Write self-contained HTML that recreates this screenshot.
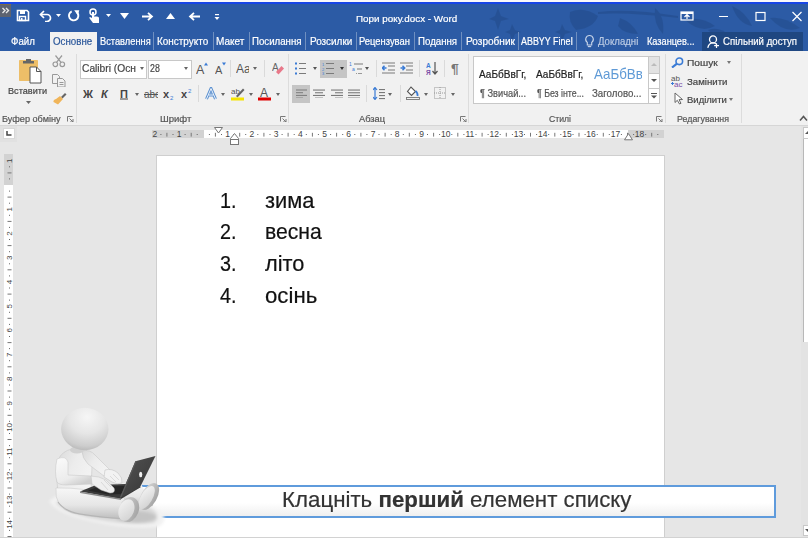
<!DOCTYPE html>
<html><head><meta charset="utf-8"><style>
html,body{margin:0;padding:0;}
body{width:808px;height:538px;overflow:hidden;position:relative;background:#e6e6e6;font-family:"Liberation Sans", sans-serif;}
.r{position:absolute;display:block;}
.t{position:absolute;white-space:pre;-webkit-text-stroke:0.2px currentColor;}
</style></head><body>
<div class="r" style="left:0px;top:0px;width:808px;height:2px;background:#fafafa;"></div><div class="r" style="left:0px;top:2px;width:808px;height:2px;background:#1846e6;"></div><div class="r" style="left:0px;top:4px;width:808px;height:47px;background:#2c5ba5;"></div><svg class="r" style="left:470px;top:4px;" width="338" height="47" viewBox="0 0 338 47">
<g fill="#234c8c" opacity="0.6">
<path d="M28 4 l3 8 l8 3 l-8 2 l-3 9 l-3 -9 l-6 -2 l6 -3z"/>
<path d="M42 20 l3 6 l6 2 l-6 2 l-3 7 l-2 -7 l-5 -2 l5 -2z"/>
<path d="M92 20 l3 6 l7 2 l-7 2 l-3 7 l-2 -7 l-5 -2 l5 -2z"/>
<path d="M100 8 q14 -6 28 4 q-4 12 -22 14 q-8 -8 -6 -18z"/>
<path d="M128 8 q30 -4 80 4 l0 2 q-50 -6 -80 -4z"/>
<path d="M150 14 q12 4 18 16 q-14 0 -20 -8z"/>
<path d="M185 4 q10 8 8 26 q-10 -10 -8 -26z"/>
<path d="M215 16 q16 -4 30 6 q-14 8 -30 -6z"/>
<path d="M262 2 q14 6 20 20 q-14 -2 -20 -20z"/>
<path d="M300 14 q14 -2 30 10 q-16 6 -30 -10z"/>
<path d="M238 26 q12 -4 22 6 q-12 6 -22 -6z"/>
</g></svg><div class="r" style="left:0px;top:4px;width:11px;height:13px;background:#5d6370;border-top:1px solid #7a6a4a;box-sizing:border-box;"></div><svg class="r" style="left:1px;top:7px;" width="9" height="7" viewBox="0 0 9 7"><path d="M1.5 1 L4 3.5 L1.5 6 M5 1 L7.5 3.5 L5 6" stroke="#e8e8e8" stroke-width="1.4" fill="none"/></svg><svg class="r" style="left:16px;top:9px;" width="14" height="13" viewBox="0 0 14 13"><path d="M1.5 1.5 h9.5 l1.5 1.5 v8.5 h-11z" fill="none" stroke="#fff" stroke-width="1.6"/><rect x="4" y="1.5" width="5" height="3.5" fill="#fff"/><rect x="3.5" y="7.5" width="6" height="4" fill="none" stroke="#fff" stroke-width="1.4"/><rect x="5" y="9" width="1.5" height="2" fill="#fff"/></svg><svg class="r" style="left:39px;top:9px;" width="15" height="13" viewBox="0 0 15 13"><path d="M5 2 L1.5 5.5 L5 9" fill="none" stroke="#fff" stroke-width="1.7"/><path d="M2 5.5 H8 a3.5 3.5 0 0 1 0 7 H6" fill="none" stroke="#fff" stroke-width="1.7"/></svg><svg class="r" style="left:56px;top:14px;" width="5" height="3" viewBox="0 0 5 3"><path d="M0 0 H5 L2.5 3z" fill="#fff"/></svg><svg class="r" style="left:67px;top:9px;" width="14" height="13" viewBox="0 0 14 13"><path d="M4.7 2.4 A4.7 4.7 0 1 0 10.1 3.5" fill="none" stroke="#fff" stroke-width="1.9"/><path d="M7.2 1.2 L12.3 1.2 L10.8 6.2z" fill="#fff"/></svg><svg class="r" style="left:88px;top:8px;" width="12" height="16" viewBox="0 0 12 16"><circle cx="5" cy="4" r="3" fill="none" stroke="#fff" stroke-width="1.5"/><path d="M4 4 v6 l-2 -1 q-1.5 0.5 0 2 l3 4 h6 v-5 q0 -1.5 -2 -1.5 h-3 v-4.5z" fill="#fff"/></svg><svg class="r" style="left:106px;top:14px;" width="5" height="3" viewBox="0 0 5 3"><path d="M0 0 H5 L2.5 3z" fill="#fff"/></svg><svg class="r" style="left:120px;top:13px;" width="9" height="6" viewBox="0 0 9 6"><path d="M0 0 H9 L4.5 6z" fill="#fff"/></svg><svg class="r" style="left:142px;top:12px;" width="12" height="9" viewBox="0 0 12 9"><path d="M0 4.5 H10 M6 0.8 L10 4.5 L6 8.2" fill="none" stroke="#fff" stroke-width="1.8"/></svg><svg class="r" style="left:166px;top:13px;" width="9" height="6" viewBox="0 0 9 6"><path d="M0 6 H9 L4.5 0z" fill="#fff"/></svg><svg class="r" style="left:188px;top:12px;" width="12" height="9" viewBox="0 0 12 9"><path d="M12 4.5 H2 M6 0.8 L2 4.5 L6 8.2" fill="none" stroke="#fff" stroke-width="1.8"/></svg><svg class="r" style="left:214px;top:14px;" width="6" height="7" viewBox="0 0 6 7"><rect x="1" y="0" width="4" height="1.2" fill="#fff"/><path d="M0.5 3 H5.5 L3 6z" fill="#fff"/></svg><svg class="r" style="left:680px;top:11px;" width="14" height="10" viewBox="0 0 14 10"><rect x="1" y="1" width="12" height="8" fill="none" stroke="#fff" stroke-width="1.2"/><rect x="1" y="1" width="12" height="2" fill="#fff"/><path d="M4.5 6 L7 3.5 L9.5 6 M7 3.5 V8" stroke="#fff" stroke-width="1.2" fill="none"/></svg><div class="r" style="left:719px;top:16px;width:9px;height:1px;background:#fff;"></div><svg class="r" style="left:755px;top:11px;" width="11" height="11" viewBox="0 0 11 11"><rect x="1" y="1.5" width="9" height="8" fill="none" stroke="#fff" stroke-width="1.2"/></svg><svg class="r" style="left:791px;top:11px;" width="12" height="11" viewBox="0 0 12 11"><path d="M1.5 1 L10.5 10 M10.5 1 L1.5 10" stroke="#fff" stroke-width="1.2"/></svg><div class="r" style="left:50px;top:32px;width:47px;height:19px;background:#f1f1f1;"></div><div class="r" style="left:702px;top:32px;width:101px;height:19px;background:#1f4781;"></div><div class="r" style="left:153px;top:32px;width:1px;height:18px;background:#6f8fc0;"></div><div class="r" style="left:213px;top:32px;width:1px;height:18px;background:#6f8fc0;"></div><div class="r" style="left:249px;top:32px;width:1px;height:18px;background:#6f8fc0;"></div><div class="r" style="left:305px;top:32px;width:1px;height:18px;background:#6f8fc0;"></div><div class="r" style="left:356px;top:32px;width:1px;height:18px;background:#6f8fc0;"></div><div class="r" style="left:414px;top:32px;width:1px;height:18px;background:#6f8fc0;"></div><div class="r" style="left:461px;top:32px;width:1px;height:18px;background:#6f8fc0;"></div><div class="r" style="left:518px;top:32px;width:1px;height:18px;background:#6f8fc0;"></div><div class="r" style="left:576px;top:32px;width:1px;height:18px;background:#6f8fc0;"></div><svg class="r" style="left:584px;top:34px;" width="11" height="15" viewBox="0 0 11 15"><path d="M5.5 1.5 a3.8 3.8 0 0 0 -2.2 6.9 v2.6 h4.4 v-2.6 a3.8 3.8 0 0 0 -2.2 -6.9z" fill="none" stroke="#c9d6ea" stroke-width="1.1"/><path d="M3.8 12.6 h3.4" stroke="#c9d6ea" stroke-width="1.1"/></svg><svg class="r" style="left:706px;top:33px;" width="14" height="16" viewBox="0 0 14 16"><circle cx="7" cy="6.4" r="3.5" fill="none" stroke="#fff" stroke-width="1.3"/><path d="M1.8 14.8 q1 -5 5.2 -5 q2.5 0 3.8 1.6" fill="none" stroke="#fff" stroke-width="1.3"/><path d="M10.5 10.5 v4.5 M8.2 12.7 h4.8" stroke="#fff" stroke-width="1.2"/></svg><div class="r" style="left:0px;top:51px;width:808px;height:74px;background:#f1f1f1;"></div><div class="r" style="left:0px;top:125px;width:808px;height:1px;background:#d6d6d6;"></div><div class="r" style="left:76px;top:54px;width:1px;height:69px;background:#dcdcdc;"></div><div class="r" style="left:288px;top:54px;width:1px;height:69px;background:#dcdcdc;"></div><div class="r" style="left:468px;top:54px;width:1px;height:69px;background:#dcdcdc;"></div><div class="r" style="left:665px;top:54px;width:1px;height:69px;background:#dcdcdc;"></div><div class="r" style="left:741px;top:54px;width:1px;height:69px;background:#dcdcdc;"></div><svg class="r" style="left:67px;top:116px;" width="7" height="6" viewBox="0 0 7 6"><path d="M0.5 5.5 V0.5 H5.5" fill="none" stroke="#777" stroke-width="1"/><path d="M2.5 2.5 L6 6 M6 3 V6 H3" fill="none" stroke="#777" stroke-width="1"/></svg><svg class="r" style="left:280px;top:116px;" width="7" height="6" viewBox="0 0 7 6"><path d="M0.5 5.5 V0.5 H5.5" fill="none" stroke="#777" stroke-width="1"/><path d="M2.5 2.5 L6 6 M6 3 V6 H3" fill="none" stroke="#777" stroke-width="1"/></svg><svg class="r" style="left:460px;top:116px;" width="7" height="6" viewBox="0 0 7 6"><path d="M0.5 5.5 V0.5 H5.5" fill="none" stroke="#777" stroke-width="1"/><path d="M2.5 2.5 L6 6 M6 3 V6 H3" fill="none" stroke="#777" stroke-width="1"/></svg><svg class="r" style="left:656px;top:116px;" width="7" height="6" viewBox="0 0 7 6"><path d="M0.5 5.5 V0.5 H5.5" fill="none" stroke="#777" stroke-width="1"/><path d="M2.5 2.5 L6 6 M6 3 V6 H3" fill="none" stroke="#777" stroke-width="1"/></svg><svg class="r" style="left:18px;top:57px;" width="25" height="27" viewBox="0 0 25 27"><rect x="1" y="3" width="19" height="21" rx="1" fill="#f0c674"/><rect x="1" y="3" width="19" height="21" rx="1" fill="#e9b55c" opacity="0.5"/><path d="M5 6.5 h11 v-2.5 h-3 v-2 h-5 v2 h-3z" fill="#666"/><path d="M12 10 h6.5 l4.5 4.5 v11.5 h-11z" fill="#fff" stroke="#555" stroke-width="1"/><path d="M18.5 10 v4.5 h4.5" fill="none" stroke="#555" stroke-width="1"/></svg><svg class="r" style="left:26px;top:101px;" width="5" height="3" viewBox="0 0 5 3"><path d="M0 0 H5 L2.5 3z" fill="#666"/></svg><svg class="r" style="left:52px;top:55px;" width="14" height="13" viewBox="0 0 14 13"><circle cx="3.3" cy="9.3" r="2.3" fill="none" stroke="#999" stroke-width="1.2"/><circle cx="10.3" cy="9.3" r="2.3" fill="none" stroke="#999" stroke-width="1.2"/><path d="M4.5 7.3 L10 0.5 M9 7.3 L3.5 0.5" stroke="#999" stroke-width="1.2"/></svg><svg class="r" style="left:52px;top:74px;" width="14" height="13" viewBox="0 0 14 13"><path d="M0.5 0.5 h5 l2 2 v7 h-7z" fill="#f1f1f1" stroke="#999" stroke-width="1"/><path d="M5.5 4.5 h5 l2.5 2.5 v6 h-7.5z" fill="#f1f1f1" stroke="#999" stroke-width="1"/><path d="M7.5 8.5 h4 M7.5 10.5 h4" stroke="#999"/></svg><svg class="r" style="left:52px;top:92px;" width="15" height="14" viewBox="0 0 15 14"><path d="M9 5 L13 1 L14.5 2.5 L10.5 6.5z" fill="#666"/><path d="M8 4 L11 7 L6 12.5 L1.5 10 Q1 8 4 7z" fill="#f0b55a"/></svg><div class="r" style="left:80px;top:60px;width:67px;height:19px;background:#ffffff;border:1px solid #c8c8c8;box-sizing:border-box;"></div><div class="r" style="left:148px;top:60px;width:44px;height:19px;background:#ffffff;border:1px solid #c8c8c8;box-sizing:border-box;"></div><div class="r" style="left:82px;top:60px;width:54px;height:18px;overflow:hidden"><div class="t" style="left:0px;top:3.29px;font-size:11px;line-height:11px;color:#444;transform:scaleX(0.93);transform-origin:0 0">Calibri (Основний)</div></div><svg class="r" style="left:140px;top:67px;" width="4" height="3" viewBox="0 0 4 3"><path d="M0 0 H4 L2 3z" fill="#666"/></svg><svg class="r" style="left:184px;top:67px;" width="4" height="3" viewBox="0 0 4 3"><path d="M0 0 H4 L2 3z" fill="#666"/></svg><svg class="r" style="left:196px;top:62px;" width="12" height="13" viewBox="0 0 12 13"><text x="0" y="12" font-family="Liberation Sans" font-size="12.5" fill="#555">A</text><path d="M8 3.5 L10 0.5 L12 3.5z" fill="#3a7bd5"/></svg><svg class="r" style="left:215px;top:62px;" width="11" height="13" viewBox="0 0 11 13"><text x="0" y="12" font-family="Liberation Sans" font-size="11" fill="#555">A</text><path d="M7 0.5 L11 0.5 L9 3.5z" fill="#3a7bd5"/></svg><div class="r" style="left:230px;top:60px;width:1px;height:17px;background:#dadada;"></div><svg class="r" style="left:236px;top:62px;" width="13" height="12" viewBox="0 0 13 12"><text x="0" y="11" font-family="Liberation Sans" font-size="12" fill="#555">Aa</text></svg><svg class="r" style="left:253px;top:67px;" width="4" height="3" viewBox="0 0 4 3"><path d="M0 0 H4 L2 3z" fill="#666"/></svg><div class="r" style="left:264px;top:60px;width:1px;height:17px;background:#dadada;"></div><svg class="r" style="left:272px;top:62px;" width="12" height="13" viewBox="0 0 12 13"><text x="0" y="9" font-family="Liberation Sans" font-size="10" fill="#666">A</text><path d="M4 10 L9.5 4 L12 6.5 L6.5 12.5z" fill="#e8788a"/></svg><svg class="r" style="left:83px;top:89px;" width="11" height="9" viewBox="0 0 11 9"><text x="0" y="8.5" font-family="Liberation Sans" font-weight="bold" font-size="11" fill="#444">Ж</text></svg><svg class="r" style="left:101px;top:89px;" width="9" height="9" viewBox="0 0 9 9"><text x="0" y="8.5" font-family="Liberation Sans" font-weight="bold" font-style="italic" font-size="11" fill="#444">К</text></svg><svg class="r" style="left:120px;top:89px;" width="9" height="11" viewBox="0 0 9 11"><text x="0" y="8.5" font-family="Liberation Sans" font-weight="bold" font-size="11" fill="#444">П</text><rect x="0" y="9.5" width="8" height="1" fill="#444"/></svg><svg class="r" style="left:135px;top:93px;" width="4" height="3" viewBox="0 0 4 3"><path d="M0 0 H4 L2 3z" fill="#666"/></svg><svg class="r" style="left:144px;top:89px;" width="14" height="10" viewBox="0 0 14 10"><text x="0" y="8.5" font-family="Liberation Sans" font-size="10" fill="#555">abc</text><rect x="0" y="5" width="14" height="1" fill="#555"/></svg><svg class="r" style="left:163px;top:89px;" width="12" height="11" viewBox="0 0 12 11"><text x="0" y="8.5" font-family="Liberation Sans" font-weight="bold" font-size="11" fill="#444">x</text><text x="7" y="10.5" font-family="Liberation Sans" font-size="6" fill="#3a7bd5">2</text></svg><svg class="r" style="left:181px;top:88px;" width="11" height="11" viewBox="0 0 11 11"><text x="0" y="9.5" font-family="Liberation Sans" font-weight="bold" font-size="11" fill="#444">x</text><text x="7" y="5" font-family="Liberation Sans" font-size="6" fill="#3a7bd5">2</text></svg><div class="r" style="left:198px;top:85px;width:1px;height:17px;background:#dadada;"></div><svg class="r" style="left:205px;top:87px;" width="12" height="13" viewBox="0 0 12 13"><path d="M1.5 12 L6 1.5 L10.5 12 M3.5 8 H8.5" fill="none" stroke="#5a90d0" stroke-width="3" stroke-linejoin="round"/><path d="M1.5 12 L6 1.5 L10.5 12 M3.5 8 H8.5" fill="none" stroke="#eef4fb" stroke-width="1" stroke-linejoin="round"/></svg><svg class="r" style="left:221px;top:93px;" width="4" height="3" viewBox="0 0 4 3"><path d="M0 0 H4 L2 3z" fill="#666"/></svg><svg class="r" style="left:231px;top:87px;" width="14" height="14" viewBox="0 0 14 14"><text x="0" y="7" font-family="Liberation Sans" font-size="8" fill="#555">ab</text><path d="M5 9 L12 1.5 L13.5 3 L6.5 10.5z" fill="#666"/><rect x="0" y="10.5" width="13" height="3" fill="#f5e400"/></svg><svg class="r" style="left:249px;top:93px;" width="4" height="3" viewBox="0 0 4 3"><path d="M0 0 H4 L2 3z" fill="#666"/></svg><svg class="r" style="left:258px;top:87px;" width="14" height="14" viewBox="0 0 14 14"><text x="2" y="10" font-family="Liberation Sans" font-size="12" fill="#555">A</text><rect x="0" y="10.5" width="13" height="3" fill="#e00000"/></svg><svg class="r" style="left:276px;top:93px;" width="4" height="3" viewBox="0 0 4 3"><path d="M0 0 H4 L2 3z" fill="#666"/></svg><svg class="r" style="left:295px;top:62px;" width="12" height="13" viewBox="0 0 12 13"><rect x="0" y="0.5" width="2" height="2" fill="#3a7bd5"/><rect x="0" y="5.5" width="2" height="2" fill="#3a7bd5"/><rect x="0" y="10.5" width="2" height="2" fill="#3a7bd5"/><rect x="4" y="1" width="7" height="1.0" fill="#7a7a7a"/><rect x="4" y="6" width="7" height="1.0" fill="#7a7a7a"/><rect x="4" y="11" width="7" height="1.0" fill="#7a7a7a"/></svg><svg class="r" style="left:313px;top:67px;" width="4" height="3" viewBox="0 0 4 3"><path d="M0 0 H4 L2 3z" fill="#555"/></svg><div class="r" style="left:320px;top:60px;width:27px;height:18px;background:#c5c5c5;"></div><svg class="r" style="left:322px;top:62px;" width="14" height="13" viewBox="0 0 14 13"><text x="0" y="3.5" font-family="Liberation Sans" font-size="4" fill="#3a7bd5">1</text><text x="0" y="8.5" font-family="Liberation Sans" font-size="4" fill="#3a7bd5">2</text><text x="0" y="13" font-family="Liberation Sans" font-size="4" fill="#3a7bd5">3</text><rect x="4" y="1" width="8" height="1.0" fill="#7a7a7a"/><rect x="4" y="6" width="8" height="1.0" fill="#7a7a7a"/><rect x="4" y="11" width="8" height="1.0" fill="#7a7a7a"/></svg><svg class="r" style="left:340px;top:67px;" width="4" height="3" viewBox="0 0 4 3"><path d="M0 0 H4 L2 3z" fill="#333"/></svg><svg class="r" style="left:349px;top:62px;" width="14" height="13" viewBox="0 0 14 13"><text x="0" y="4" font-family="Liberation Sans" font-size="5" fill="#3a7bd5">1</text><text x="3" y="9" font-family="Liberation Sans" font-size="5" fill="#3a7bd5">a</text><rect x="5" y="1.5" width="9" height="1.0" fill="#7a7a7a"/><rect x="8" y="6.5" width="5" height="1.0" fill="#7a7a7a"/><rect x="7" y="11" width="1" height="1" fill="#999"/><rect x="9" y="11" width="4" height="1" fill="#999"/></svg><svg class="r" style="left:365px;top:67px;" width="4" height="3" viewBox="0 0 4 3"><path d="M0 0 H4 L2 3z" fill="#555"/></svg><div class="r" style="left:376px;top:60px;width:1px;height:17px;background:#dadada;"></div><svg class="r" style="left:382px;top:62px;" width="14" height="12" viewBox="0 0 14 12"><rect x="0" y="0.5" width="13" height="1.0" fill="#7a7a7a"/><rect x="0" y="10.5" width="13" height="1.0" fill="#7a7a7a"/><rect x="6" y="3.5" width="7" height="1.0" fill="#7a7a7a"/><rect x="6" y="7.5" width="7" height="1.0" fill="#7a7a7a"/><path d="M4.5 6 L0.5 6 M2.5 3.8 L0.3 6 L2.5 8.2" stroke="#3a7bd5" stroke-width="1.5" fill="none"/></svg><svg class="r" style="left:400px;top:62px;" width="14" height="12" viewBox="0 0 14 12"><rect x="0" y="0.5" width="13" height="1.0" fill="#7a7a7a"/><rect x="0" y="10.5" width="13" height="1.0" fill="#7a7a7a"/><rect x="6" y="3.5" width="7" height="1.0" fill="#7a7a7a"/><rect x="6" y="7.5" width="7" height="1.0" fill="#7a7a7a"/><path d="M0.5 6 L4.5 6 M2.5 3.8 L4.7 6 L2.5 8.2" stroke="#3a7bd5" stroke-width="1.5" fill="none"/></svg><div class="r" style="left:419px;top:60px;width:1px;height:17px;background:#dadada;"></div><svg class="r" style="left:426px;top:62px;" width="12" height="13" viewBox="0 0 12 13"><text x="0" y="5.5" font-family="Liberation Sans" font-weight="bold" font-size="6.5" fill="#3a7bd5">A</text><text x="0" y="12.5" font-family="Liberation Sans" font-weight="bold" font-size="6.5" fill="#7a4fa8">Я</text><path d="M9 0 V11.5 M6.5 9 L9 12 L11.5 9" stroke="#555" stroke-width="1.2" fill="none"/></svg><div class="r" style="left:444px;top:60px;width:1px;height:17px;background:#dadada;"></div><svg class="r" style="left:451px;top:62px;" width="11" height="13" viewBox="0 0 11 13"><text x="0" y="11.5" font-family="Liberation Sans" font-weight="bold" font-size="14" fill="#777">¶</text></svg><div class="r" style="left:292px;top:85px;width:18px;height:18px;background:#c5c5c5;"></div><svg class="r" style="left:296px;top:89px;" width="11" height="9" viewBox="0 0 11 9"><rect x="0" y="0.5" width="11" height="1.0" fill="#7a7a7a"/><rect x="0" y="5.9" width="11" height="1.0" fill="#7a7a7a"/><rect x="0" y="3.2" width="7" height="1.0" fill="#7a7a7a"/><rect x="0" y="8.6" width="7" height="1.0" fill="#7a7a7a"/></svg><svg class="r" style="left:313px;top:89px;" width="12" height="9" viewBox="0 0 12 9"><rect x="0" y="0.5" width="12" height="1.1" fill="#7a7a7a"/><rect x="0" y="5.9" width="12" height="1.1" fill="#7a7a7a"/><rect x="2" y="3.2" width="8" height="1.1" fill="#7a7a7a"/><rect x="2" y="8.6" width="8" height="1.1" fill="#7a7a7a"/></svg><svg class="r" style="left:331px;top:89px;" width="12" height="9" viewBox="0 0 12 9"><rect x="0" y="0.5" width="12" height="1.1" fill="#7a7a7a"/><rect x="0" y="5.9" width="12" height="1.1" fill="#7a7a7a"/><rect x="4" y="3.2" width="8" height="1.1" fill="#7a7a7a"/><rect x="4" y="8.6" width="8" height="1.1" fill="#7a7a7a"/></svg><svg class="r" style="left:348px;top:89px;" width="12" height="9" viewBox="0 0 12 9"><rect x="0" y="0.5" width="12" height="1.1" fill="#7a7a7a"/><rect x="0" y="3.2" width="12" height="1.1" fill="#7a7a7a"/><rect x="0" y="5.9" width="12" height="1.1" fill="#7a7a7a"/><rect x="0" y="8.6" width="12" height="1.1" fill="#7a7a7a"/></svg><div class="r" style="left:366px;top:85px;width:1px;height:17px;background:#dadada;"></div><svg class="r" style="left:373px;top:87px;" width="12" height="13" viewBox="0 0 12 13"><path d="M2 1 V12 M0 3 L2 0.5 L4 3 M0 10 L2 12.5 L4 10" stroke="#3a7bd5" stroke-width="1.2" fill="none"/><rect x="6" y="2" width="6" height="1.1" fill="#7a7a7a"/><rect x="6" y="5" width="6" height="1.1" fill="#7a7a7a"/><rect x="6" y="8" width="6" height="1.1" fill="#7a7a7a"/><rect x="6" y="11" width="6" height="1.1" fill="#7a7a7a"/></svg><svg class="r" style="left:388px;top:93px;" width="4" height="3" viewBox="0 0 4 3"><path d="M0 0 H4 L2 3z" fill="#666"/></svg><div class="r" style="left:400px;top:85px;width:1px;height:17px;background:#dadada;"></div><svg class="r" style="left:406px;top:86px;" width="14" height="14" viewBox="0 0 14 14"><path d="M5 1 L1.5 5.5 L5.5 9.5 L9.5 5.5z" fill="#fff" stroke="#555" stroke-width="1.1"/><path d="M9.5 5 q2.5 2 2 5" stroke="#3a7bd5" stroke-width="1.8" fill="none"/><rect x="0.5" y="11.5" width="13" height="2" fill="#f1f1f1" stroke="#777" stroke-width="0.9"/></svg><svg class="r" style="left:424px;top:93px;" width="4" height="3" viewBox="0 0 4 3"><path d="M0 0 H4 L2 3z" fill="#666"/></svg><svg class="r" style="left:434px;top:87px;" width="12" height="12" viewBox="0 0 12 12"><rect x="0.5" y="0.5" width="11" height="11" fill="none" stroke="#999" stroke-dasharray="1 1"/><path d="M6 0 V12 M0 6 H12" stroke="#999" stroke-dasharray="1 1"/></svg><svg class="r" style="left:451px;top:93px;" width="4" height="3" viewBox="0 0 4 3"><path d="M0 0 H4 L2 3z" fill="#666"/></svg><div class="r" style="left:473px;top:56px;width:176px;height:48px;background:#ffffff;border:1px solid #c8c8c8;box-sizing:border-box;"></div><div class="r" style="left:648px;top:56px;width:12px;height:48px;background:#ffffff;border:1px solid #c8c8c8;box-sizing:border-box;"></div><div class="r" style="left:649px;top:57px;width:10px;height:16px;background:#e3e3e3;"></div><div class="r" style="left:648px;top:73px;width:12px;height:1px;background:#c8c8c8;"></div><div class="r" style="left:648px;top:88px;width:12px;height:1px;background:#c8c8c8;"></div><svg class="r" style="left:651px;top:63px;" width="6" height="3" viewBox="0 0 6 3"><path d="M0 3 H6 L3 0z" fill="#bbb"/></svg><svg class="r" style="left:651px;top:79px;" width="6" height="3" viewBox="0 0 6 3"><path d="M0 0 H6 L3 3z" fill="#555"/></svg><svg class="r" style="left:651px;top:93px;" width="6" height="6" viewBox="0 0 6 6"><rect x="0" y="0" width="6" height="1" fill="#555"/><path d="M0 2.5 H6 L3 5.5z" fill="#555"/></svg><div class="r" style="left:593px;top:60px;width:49px;height:26px;overflow:hidden"><div class="t" style="left:1px;top:6.53px;font-size:14.5px;line-height:14.5px;color:#5f9ad6;-webkit-text-stroke:0;transform:scaleX(0.92);transform-origin:0 0">АаБбВвГг</div></div><svg class="r" style="left:671px;top:57px;" width="13" height="11" viewBox="0 0 13 11"><circle cx="8.3" cy="4.3" r="3.3" fill="none" stroke="#3a7bd5" stroke-width="1.6"/><path d="M6 6.6 L1 10.5" stroke="#3a7bd5" stroke-width="2.2"/></svg><svg class="r" style="left:727px;top:61px;" width="4" height="3" viewBox="0 0 4 3"><path d="M0 0 H4 L2 3z" fill="#777"/></svg><svg class="r" style="left:671px;top:74px;" width="15" height="13" viewBox="0 0 15 13"><text x="0" y="6.5" font-family="Liberation Sans" font-size="8" fill="#555">ab</text><text x="3" y="12.5" font-family="Liberation Sans" font-size="8" fill="#7a4fa8">ac</text><path d="M0 9.5 h3 M1.5 8 v3" stroke="#3a7bd5" stroke-width="1"/></svg><svg class="r" style="left:674px;top:92px;" width="10" height="13" viewBox="0 0 10 13"><path d="M1 1 V10.5 L3.3 8.3 L5.5 12 L7 11.3 L5 7.7 L8.5 7.5z" fill="#fff" stroke="#666" stroke-width="1"/></svg><svg class="r" style="left:729px;top:98px;" width="4" height="3" viewBox="0 0 4 3"><path d="M0 0 H4 L2 3z" fill="#777"/></svg><svg class="r" style="left:799px;top:115px;" width="9" height="6" viewBox="0 0 9 6"><path d="M1 5.5 L4.5 1.5 L8 5.5" stroke="#555" stroke-width="1.5" fill="none"/></svg><div class="r" style="left:0px;top:126px;width:808px;height:412px;background:#e6e6e6;"></div><div class="r" style="left:0px;top:126px;width:17px;height:16px;background:#e1e1e1;"></div><div class="r" style="left:3px;top:128px;width:12px;height:11px;background:#ffffff;border:1px solid #d8d8d8;box-sizing:border-box;"></div><svg class="r" style="left:6px;top:131px;" width="6" height="5" viewBox="0 0 6 5"><path d="M1 0 V4 H5.5" stroke="#444" stroke-width="1.5" fill="none"/></svg><div class="r" style="left:152px;top:130px;width:52px;height:8px;background:#d2d2d2;"></div><div class="r" style="left:204px;top:130px;width:424px;height:8px;background:#ffffff;"></div><div class="r" style="left:628px;top:130px;width:36px;height:8px;background:#d2d2d2;"></div><svg class="r" style="left:0px;top:0px;pointer-events:none;" width="808" height="160" viewBox="0 0 808 160"><text x="154.8" y="137" text-anchor="middle" font-family="Liberation Sans" font-size="8.5" fill="#444">2</text><text x="179.1" y="137" text-anchor="middle" font-family="Liberation Sans" font-size="8.5" fill="#444">1</text><text x="227.5" y="137" text-anchor="middle" font-family="Liberation Sans" font-size="8.5" fill="#444">1</text><text x="251.8" y="137" text-anchor="middle" font-family="Liberation Sans" font-size="8.5" fill="#444">2</text><text x="276.0" y="137" text-anchor="middle" font-family="Liberation Sans" font-size="8.5" fill="#444">3</text><text x="300.3" y="137" text-anchor="middle" font-family="Liberation Sans" font-size="8.5" fill="#444">4</text><text x="324.5" y="137" text-anchor="middle" font-family="Liberation Sans" font-size="8.5" fill="#444">5</text><text x="348.7" y="137" text-anchor="middle" font-family="Liberation Sans" font-size="8.5" fill="#444">6</text><text x="373.0" y="137" text-anchor="middle" font-family="Liberation Sans" font-size="8.5" fill="#444">7</text><text x="397.2" y="137" text-anchor="middle" font-family="Liberation Sans" font-size="8.5" fill="#444">8</text><text x="421.5" y="137" text-anchor="middle" font-family="Liberation Sans" font-size="8.5" fill="#444">9</text><text x="445.7" y="137" text-anchor="middle" font-family="Liberation Sans" font-size="8.5" fill="#444">10</text><text x="469.9" y="137" text-anchor="middle" font-family="Liberation Sans" font-size="8.5" fill="#444">11</text><text x="494.2" y="137" text-anchor="middle" font-family="Liberation Sans" font-size="8.5" fill="#444">12</text><text x="518.4" y="137" text-anchor="middle" font-family="Liberation Sans" font-size="8.5" fill="#444">13</text><text x="542.7" y="137" text-anchor="middle" font-family="Liberation Sans" font-size="8.5" fill="#444">14</text><text x="566.9" y="137" text-anchor="middle" font-family="Liberation Sans" font-size="8.5" fill="#444">15</text><text x="591.1" y="137" text-anchor="middle" font-family="Liberation Sans" font-size="8.5" fill="#444">16</text><text x="615.4" y="137" text-anchor="middle" font-family="Liberation Sans" font-size="8.5" fill="#444">17</text><text x="639.6" y="137" text-anchor="middle" font-family="Liberation Sans" font-size="8.5" fill="#444">18</text><rect x="166.4" y="132.8" width="1" height="3.8" fill="#777"/><rect x="190.7" y="132.8" width="1" height="3.8" fill="#777"/><rect x="214.9" y="132.8" width="1" height="3.8" fill="#777"/><rect x="239.2" y="132.8" width="1" height="3.8" fill="#777"/><rect x="263.4" y="132.8" width="1" height="3.8" fill="#777"/><rect x="287.6" y="132.8" width="1" height="3.8" fill="#777"/><rect x="311.9" y="132.8" width="1" height="3.8" fill="#777"/><rect x="336.1" y="132.8" width="1" height="3.8" fill="#777"/><rect x="360.4" y="132.8" width="1" height="3.8" fill="#777"/><rect x="384.6" y="132.8" width="1" height="3.8" fill="#777"/><rect x="408.8" y="132.8" width="1" height="3.8" fill="#777"/><rect x="433.1" y="132.8" width="1" height="3.8" fill="#777"/><rect x="457.3" y="132.8" width="1" height="3.8" fill="#777"/><rect x="481.6" y="132.8" width="1" height="3.8" fill="#777"/><rect x="505.8" y="132.8" width="1" height="3.8" fill="#777"/><rect x="530.0" y="132.8" width="1" height="3.8" fill="#777"/><rect x="554.3" y="132.8" width="1" height="3.8" fill="#777"/><rect x="578.5" y="132.8" width="1" height="3.8" fill="#777"/><rect x="602.8" y="132.8" width="1" height="3.8" fill="#777"/><rect x="627.0" y="132.8" width="1" height="3.8" fill="#777"/><rect x="651.2" y="132.8" width="1" height="3.8" fill="#777"/><rect x="160.4" y="134" width="1" height="1" fill="#666"/><rect x="172.5" y="134" width="1" height="1" fill="#666"/><rect x="184.6" y="134" width="1" height="1" fill="#666"/><rect x="196.7" y="134" width="1" height="1" fill="#666"/><rect x="208.9" y="134" width="1" height="1" fill="#666"/><rect x="221.0" y="134" width="1" height="1" fill="#666"/><rect x="233.1" y="134" width="1" height="1" fill="#666"/><rect x="245.2" y="134" width="1" height="1" fill="#666"/><rect x="257.3" y="134" width="1" height="1" fill="#666"/><rect x="269.5" y="134" width="1" height="1" fill="#666"/><rect x="281.6" y="134" width="1" height="1" fill="#666"/><rect x="293.7" y="134" width="1" height="1" fill="#666"/><rect x="305.8" y="134" width="1" height="1" fill="#666"/><rect x="317.9" y="134" width="1" height="1" fill="#666"/><rect x="330.1" y="134" width="1" height="1" fill="#666"/><rect x="342.2" y="134" width="1" height="1" fill="#666"/><rect x="354.3" y="134" width="1" height="1" fill="#666"/><rect x="366.4" y="134" width="1" height="1" fill="#666"/><rect x="378.5" y="134" width="1" height="1" fill="#666"/><rect x="390.7" y="134" width="1" height="1" fill="#666"/><rect x="402.8" y="134" width="1" height="1" fill="#666"/><rect x="414.9" y="134" width="1" height="1" fill="#666"/><rect x="427.0" y="134" width="1" height="1" fill="#666"/><rect x="439.1" y="134" width="1" height="1" fill="#666"/><rect x="451.3" y="134" width="1" height="1" fill="#666"/><rect x="463.4" y="134" width="1" height="1" fill="#666"/><rect x="475.5" y="134" width="1" height="1" fill="#666"/><rect x="487.6" y="134" width="1" height="1" fill="#666"/><rect x="499.7" y="134" width="1" height="1" fill="#666"/><rect x="511.9" y="134" width="1" height="1" fill="#666"/><rect x="524.0" y="134" width="1" height="1" fill="#666"/><rect x="536.1" y="134" width="1" height="1" fill="#666"/><rect x="548.2" y="134" width="1" height="1" fill="#666"/><rect x="560.3" y="134" width="1" height="1" fill="#666"/><rect x="572.5" y="134" width="1" height="1" fill="#666"/><rect x="584.6" y="134" width="1" height="1" fill="#666"/><rect x="596.7" y="134" width="1" height="1" fill="#666"/><rect x="608.8" y="134" width="1" height="1" fill="#666"/><rect x="620.9" y="134" width="1" height="1" fill="#666"/><rect x="633.1" y="134" width="1" height="1" fill="#666"/><rect x="645.2" y="134" width="1" height="1" fill="#666"/><rect x="657.3" y="134" width="1" height="1" fill="#666"/></svg><svg class="r" style="left:214px;top:127px;" width="9" height="7" viewBox="0 0 9 7"><path d="M0.5 0.5 H8.5 L4.5 6z" fill="#fff" stroke="#777" stroke-width="1"/></svg><svg class="r" style="left:230px;top:133px;" width="9" height="12" viewBox="0 0 9 12"><path d="M0.5 5.5 L4.5 0.5 L8.5 5.5 V6.5 H0.5z" fill="#fff" stroke="#777" stroke-width="1"/><rect x="0.5" y="6.5" width="8" height="5" fill="#fff" stroke="#777" stroke-width="1"/></svg><svg class="r" style="left:623.5px;top:132.5px;" width="9" height="8" viewBox="0 0 9 8"><path d="M0.5 6.8 L4.5 0.6 L8.5 6.8z" fill="#fff" stroke="#777" stroke-width="1"/></svg><div class="r" style="left:4px;top:154px;width:9px;height:31px;background:#d2d2d2;"></div><div class="r" style="left:4px;top:185px;width:9px;height:353px;background:#ffffff;"></div><svg class="r" style="left:0px;top:0px;" width="20" height="538" viewBox="0 0 20 538"><text transform="translate(11.8 160.8) rotate(-90)" x="0" y="0" text-anchor="middle" font-family="Liberation Sans" font-size="8" fill="#444">1</text><text transform="translate(11.8 209.2) rotate(-90)" x="0" y="0" text-anchor="middle" font-family="Liberation Sans" font-size="8" fill="#444">1</text><text transform="translate(11.8 233.5) rotate(-90)" x="0" y="0" text-anchor="middle" font-family="Liberation Sans" font-size="8" fill="#444">2</text><text transform="translate(11.8 257.7) rotate(-90)" x="0" y="0" text-anchor="middle" font-family="Liberation Sans" font-size="8" fill="#444">3</text><text transform="translate(11.8 282.0) rotate(-90)" x="0" y="0" text-anchor="middle" font-family="Liberation Sans" font-size="8" fill="#444">4</text><text transform="translate(11.8 306.2) rotate(-90)" x="0" y="0" text-anchor="middle" font-family="Liberation Sans" font-size="8" fill="#444">5</text><text transform="translate(11.8 330.4) rotate(-90)" x="0" y="0" text-anchor="middle" font-family="Liberation Sans" font-size="8" fill="#444">6</text><text transform="translate(11.8 354.7) rotate(-90)" x="0" y="0" text-anchor="middle" font-family="Liberation Sans" font-size="8" fill="#444">7</text><text transform="translate(11.8 378.9) rotate(-90)" x="0" y="0" text-anchor="middle" font-family="Liberation Sans" font-size="8" fill="#444">8</text><text transform="translate(11.8 403.2) rotate(-90)" x="0" y="0" text-anchor="middle" font-family="Liberation Sans" font-size="8" fill="#444">9</text><text transform="translate(11.8 427.4) rotate(-90)" x="0" y="0" text-anchor="middle" font-family="Liberation Sans" font-size="8" fill="#444">10</text><text transform="translate(11.8 451.6) rotate(-90)" x="0" y="0" text-anchor="middle" font-family="Liberation Sans" font-size="8" fill="#444">11</text><text transform="translate(11.8 475.9) rotate(-90)" x="0" y="0" text-anchor="middle" font-family="Liberation Sans" font-size="8" fill="#444">12</text><text transform="translate(11.8 500.1) rotate(-90)" x="0" y="0" text-anchor="middle" font-family="Liberation Sans" font-size="8" fill="#444">13</text><text transform="translate(11.8 524.4) rotate(-90)" x="0" y="0" text-anchor="middle" font-family="Liberation Sans" font-size="8" fill="#444">14</text><rect x="7.5" y="172.4" width="4" height="1" fill="#777"/><rect x="7.5" y="196.6" width="4" height="1" fill="#777"/><rect x="7.5" y="220.9" width="4" height="1" fill="#777"/><rect x="7.5" y="245.1" width="4" height="1" fill="#777"/><rect x="7.5" y="269.3" width="4" height="1" fill="#777"/><rect x="7.5" y="293.6" width="4" height="1" fill="#777"/><rect x="7.5" y="317.8" width="4" height="1" fill="#777"/><rect x="7.5" y="342.1" width="4" height="1" fill="#777"/><rect x="7.5" y="366.3" width="4" height="1" fill="#777"/><rect x="7.5" y="390.5" width="4" height="1" fill="#777"/><rect x="7.5" y="414.8" width="4" height="1" fill="#777"/><rect x="7.5" y="439.0" width="4" height="1" fill="#777"/><rect x="7.5" y="463.3" width="4" height="1" fill="#777"/><rect x="7.5" y="487.5" width="4" height="1" fill="#777"/><rect x="7.5" y="511.7" width="4" height="1" fill="#777"/><rect x="7.5" y="536.0" width="4" height="1" fill="#777"/><rect x="9" y="166.3" width="1" height="1" fill="#666"/><rect x="9" y="178.4" width="1" height="1" fill="#666"/><rect x="9" y="190.6" width="1" height="1" fill="#666"/><rect x="9" y="202.7" width="1" height="1" fill="#666"/><rect x="9" y="214.8" width="1" height="1" fill="#666"/><rect x="9" y="226.9" width="1" height="1" fill="#666"/><rect x="9" y="239.0" width="1" height="1" fill="#666"/><rect x="9" y="251.2" width="1" height="1" fill="#666"/><rect x="9" y="263.3" width="1" height="1" fill="#666"/><rect x="9" y="275.4" width="1" height="1" fill="#666"/><rect x="9" y="287.5" width="1" height="1" fill="#666"/><rect x="9" y="299.6" width="1" height="1" fill="#666"/><rect x="9" y="311.8" width="1" height="1" fill="#666"/><rect x="9" y="323.9" width="1" height="1" fill="#666"/><rect x="9" y="336.0" width="1" height="1" fill="#666"/><rect x="9" y="348.1" width="1" height="1" fill="#666"/><rect x="9" y="360.2" width="1" height="1" fill="#666"/><rect x="9" y="372.4" width="1" height="1" fill="#666"/><rect x="9" y="384.5" width="1" height="1" fill="#666"/><rect x="9" y="396.6" width="1" height="1" fill="#666"/><rect x="9" y="408.7" width="1" height="1" fill="#666"/><rect x="9" y="420.8" width="1" height="1" fill="#666"/><rect x="9" y="433.0" width="1" height="1" fill="#666"/><rect x="9" y="445.1" width="1" height="1" fill="#666"/><rect x="9" y="457.2" width="1" height="1" fill="#666"/><rect x="9" y="469.3" width="1" height="1" fill="#666"/><rect x="9" y="481.4" width="1" height="1" fill="#666"/><rect x="9" y="493.6" width="1" height="1" fill="#666"/><rect x="9" y="505.7" width="1" height="1" fill="#666"/><rect x="9" y="517.8" width="1" height="1" fill="#666"/><rect x="9" y="529.9" width="1" height="1" fill="#666"/><rect x="9" y="542.0" width="1" height="1" fill="#666"/></svg><div class="r" style="left:156px;top:155px;width:509px;height:383px;background:#ffffff;border:1px solid #cfcfcf;border-bottom:none;box-sizing:border-box;"></div><div class="r" style="left:801px;top:126px;width:7px;height:411px;background:#e3e3e3;"></div><div class="r" style="left:803px;top:139px;width:5px;height:203px;background:#ffffff;border-left:1px solid #b8b8b8;box-sizing:border-box;"></div><div class="r" style="left:803px;top:127px;width:5px;height:12px;background:#ffffff;border:1px solid #c8c8c8;border-right:none;box-sizing:border-box;"></div><svg class="r" style="left:805px;top:131px;" width="3" height="3" viewBox="0 0 3 3"><path d="M0 3 L3 0 V3z" fill="#555"/></svg><div class="r" style="left:803px;top:525px;width:5px;height:11px;background:#ffffff;border:1px solid #c8c8c8;border-right:none;box-sizing:border-box;"></div><svg class="r" style="left:805px;top:529px;" width="3" height="3" viewBox="0 0 3 3"><path d="M0 0 H3 V3z" fill="#555"/></svg><div class="r" style="left:0px;top:537px;width:808px;height:1px;background:#d2d2d2;"></div><div class="r" style="left:140px;top:485px;width:636px;height:33px;background:linear-gradient(#ffffff 0%, #ffffff 55%, #efefef 100%);border:2px solid #5f9bdc;box-sizing:border-box;"></div><div class="t" style="left:282.4px;top:489.38px;font-size:22px;line-height:22px;color:#333;white-space:pre;transform:scaleX(1.013);transform-origin:0 0">Клацніть <b>перший</b> елемент списку</div><svg class="r" style="left:40px;top:400px" width="130" height="138" viewBox="40 400 130 138">
<defs>
<radialGradient id="gh" cx="0.55" cy="0.22" r="0.85"><stop offset="0" stop-color="#f6f6f6"/><stop offset="0.45" stop-color="#e6e6e6"/><stop offset="0.8" stop-color="#cdcdcd"/><stop offset="1" stop-color="#b0b0b0"/></radialGradient>
<linearGradient id="gb" x1="0" y1="0" x2="0.6" y2="1"><stop offset="0" stop-color="#fbfbfb"/><stop offset="0.7" stop-color="#ececec"/><stop offset="1" stop-color="#cfcfcf"/></linearGradient>
<linearGradient id="gt" x1="0" y1="0" x2="1" y2="0.6"><stop offset="0" stop-color="#d9d9d9"/><stop offset="0.5" stop-color="#ececec"/><stop offset="1" stop-color="#f3f3f3"/></linearGradient>
<linearGradient id="gl" x1="0" y1="0" x2="0" y2="1"><stop offset="0" stop-color="#f7f7f7"/><stop offset="0.55" stop-color="#e6e6e6"/><stop offset="1" stop-color="#bdbdbd"/></linearGradient>
<linearGradient id="gsh" x1="0" y1="0" x2="1" y2="0"><stop offset="0" stop-color="#d5d5d5"/><stop offset="1" stop-color="#a5a5a5"/></linearGradient>
<linearGradient id="gsole" x1="0" y1="0" x2="1" y2="1"><stop offset="0" stop-color="#f5f5f5"/><stop offset="1" stop-color="#cfcfcf"/></linearGradient>
<linearGradient id="gscr" x1="0" y1="0" x2="1" y2="1"><stop offset="0" stop-color="#555"/><stop offset="1" stop-color="#333"/></linearGradient>
</defs>
<!-- shadow -->
<filter id="bl" x="-20%" y="-50%" width="140%" height="200%"><feGaussianBlur stdDeviation="1.6"/></filter>
<g filter="url(#bl)">
<path d="M49 501 Q55 513 90 521 Q130 530 158 527 Q167 522 163 514 Q150 500 120 495 L60 493z" fill="#f2f2f2"/>
<path d="M56 503 Q64 513 94 519 Q128 526 154 523 Q160 519 156 512 Q145 502 120 498 L64 496z" fill="#d9d9d9"/>
<ellipse cx="136" cy="517" rx="20" ry="6" fill="#c4c4c4"/>
</g>
<!-- far leg -->
<path d="M100 489 Q122 481 141 484 L153 506 Q128 510 104 506z" fill="url(#gl)"/>
<!-- far shoe -->
<ellipse cx="149" cy="496.5" rx="8" ry="14.8" transform="rotate(30 149 496.5)" fill="url(#gsh)"/>
<ellipse cx="146.6" cy="497.6" rx="5.8" ry="13" transform="rotate(30 146.6 497.6)" fill="url(#gsole)"/>
<!-- torso -->
<path d="M58 460 Q62 451 72 449 L86 450 Q92 455 92 466 L91 490 Q75 495 58 493 Q55 476 58 460z" fill="url(#gt)" stroke="#c8c8c8" stroke-width="0.6"/>
<!-- near leg -->
<path d="M56 488 Q84 487 124 497 L131 519 Q100 519 72 513 Q54 507 56 488z" fill="url(#gl)" stroke="#c4c4c4" stroke-width="0.5"/>
<path d="M58 502 Q64 511 80 514 Q104 518 130 519" fill="none" stroke="#b4b4b4" stroke-width="1.2"/>
<!-- near shoe -->
<ellipse cx="129" cy="509.5" rx="9.8" ry="12.8" transform="rotate(20 129 509.5)" fill="url(#gsh)"/>
<ellipse cx="126.4" cy="510" rx="7.6" ry="11.2" transform="rotate(20 126.4 510)" fill="url(#gsole)"/>
<!-- laptop base -->
<path d="M80 491.5 L96 485 L126 484 L141 487 L121 499z" fill="#3a3a3a"/>
<path d="M88 490.5 L99 486.5 L126 486 L124 494 L108 494.5z" fill="#262626"/>
<path d="M80 491.5 L121 498.5 L121 500 L80 493z" fill="#8a8a8a"/>
<!-- right arm -->
<path d="M82 451 Q90 449 95 455 L110 470 L104 476 L88 464 Q82 458 82 451z" fill="url(#gt)" stroke="#c2c2c2" stroke-width="0.5"/>
<path d="M105 470 Q112 468 118 473 Q123 478 122 483 Q117 485 112 482 L104 477z" fill="#f2f2f2" stroke="#bdbdbd" stroke-width="0.5"/>
<path d="M110 476 L116 482 M113 474 L119 480" stroke="#c4c4c4" stroke-width="0.5"/>
<!-- laptop screen -->
<path d="M119.8 497.8 L135.4 461.2 L155.5 456 L140 487.2z" fill="url(#gscr)"/>
<path d="M119.8 497.8 L135.4 461.2 L136.8 461 L121.5 497z" fill="#5a5a5a"/>
<ellipse cx="140.7" cy="474.5" rx="1.6" ry="2.8" fill="#f0f0f0"/>
<!-- near arm -->
<path d="M57 459 Q54 472 57 482 Q59 485 66 485 L92 484 Q98 481 92 476 L68 475 L68 462 Q66 455 57 459z" fill="url(#gb)" stroke="#c4c4c4" stroke-width="0.5"/>
<path d="M91 476 Q99 476 106 480 L114 488 Q116 493 110 493 L101 490 L92 484z" fill="#efefef" stroke="#c0c0c0" stroke-width="0.5"/>
<path d="M101 482 L108 490 M104 480 L111 487" stroke="#c8c8c8" stroke-width="0.6"/>
<!-- neck -->
<ellipse cx="77" cy="450" rx="7" ry="3.5" fill="#d0d0d0"/>
<!-- head -->
<ellipse cx="84.8" cy="429" rx="23.7" ry="21.2" fill="url(#gh)"/>
</svg>

<div class="t" style="left:11.2px;top:36.29px;font-size:11px;line-height:11px;color:#ffffff;font-weight:normal;transform:scaleX(0.884);transform-origin:0 0;">Файл</div><div class="t" style="left:53.1px;top:36.29px;font-size:11px;line-height:11px;color:#2b579a;font-weight:normal;transform:scaleX(0.885);transform-origin:0 0;">Основне</div><div class="t" style="left:99.7px;top:36.29px;font-size:11px;line-height:11px;color:#ffffff;font-weight:normal;transform:scaleX(0.843);transform-origin:0 0;">Вставлення</div><div class="t" style="left:156.7px;top:36.29px;font-size:11px;line-height:11px;color:#ffffff;font-weight:normal;transform:scaleX(0.904);transform-origin:0 0;">Конструкто</div><div class="t" style="left:216.1px;top:36.29px;font-size:11px;line-height:11px;color:#ffffff;font-weight:normal;transform:scaleX(0.912);transform-origin:0 0;">Макет</div><div class="t" style="left:252.0px;top:36.29px;font-size:11px;line-height:11px;color:#ffffff;font-weight:normal;transform:scaleX(0.879);transform-origin:0 0;">Посилання</div><div class="t" style="left:309.7px;top:36.29px;font-size:11px;line-height:11px;color:#ffffff;font-weight:normal;transform:scaleX(0.904);transform-origin:0 0;">Розсилки</div><div class="t" style="left:359.3px;top:36.29px;font-size:11px;line-height:11px;color:#ffffff;font-weight:normal;transform:scaleX(0.853);transform-origin:0 0;">Рецензуван</div><div class="t" style="left:418.1px;top:36.29px;font-size:11px;line-height:11px;color:#ffffff;font-weight:normal;transform:scaleX(0.880);transform-origin:0 0;">Подання</div><div class="t" style="left:465.5px;top:36.29px;font-size:11px;line-height:11px;color:#ffffff;font-weight:normal;transform:scaleX(0.916);transform-origin:0 0;">Розробник</div><div class="t" style="left:521.2px;top:36.29px;font-size:11px;line-height:11px;color:#ffffff;font-weight:normal;transform:scaleX(0.811);transform-origin:0 0;">ABBYY FineI</div><div class="t" style="left:597.9px;top:36.29px;font-size:11px;line-height:11px;color:#b9c9e3;font-weight:normal;transform:scaleX(0.874);transform-origin:0 0;">Докладні</div><div class="t" style="left:646.6px;top:36.29px;font-size:11px;line-height:11px;color:#ffffff;font-weight:normal;transform:scaleX(0.834);transform-origin:0 0;">Казанцев...</div><div class="t" style="left:722.5px;top:36.29px;font-size:11px;line-height:11px;color:#ffffff;font-weight:normal;transform:scaleX(0.875);transform-origin:0 0;">Спільний доступ</div><div class="t" style="left:355.6px;top:13.90px;font-size:9.8px;line-height:9.8px;color:#ffffff;font-weight:normal;transform:scaleX(1.005);transform-origin:0 0;">Пори року.docx - Word</div><div class="t" style="left:2.2px;top:113.96px;font-size:9.5px;line-height:9.5px;color:#555555;font-weight:normal;transform:scaleX(0.963);transform-origin:0 0;">Буфер обміну</div><div class="t" style="left:160.2px;top:113.96px;font-size:9.5px;line-height:9.5px;color:#555555;font-weight:normal;transform:scaleX(1.004);transform-origin:0 0;">Шрифт</div><div class="t" style="left:359.4px;top:113.96px;font-size:9.5px;line-height:9.5px;color:#555555;font-weight:normal;transform:scaleX(0.975);transform-origin:0 0;">Абзац</div><div class="t" style="left:549.1px;top:113.96px;font-size:9.5px;line-height:9.5px;color:#555555;font-weight:normal;transform:scaleX(0.910);transform-origin:0 0;">Стилі</div><div class="t" style="left:677.2px;top:113.96px;font-size:9.5px;line-height:9.5px;color:#555555;font-weight:normal;transform:scaleX(0.930);transform-origin:0 0;">Редагування</div><div class="t" style="left:8.4px;top:85.76px;font-size:9.5px;line-height:9.5px;color:#444444;font-weight:normal;transform:scaleX(0.960);transform-origin:0 0;">Вставити</div><div class="t" style="left:149.6px;top:63.29px;font-size:11px;line-height:11px;color:#444444;font-weight:normal;transform:scaleX(0.800);transform-origin:0 0;">28</div><div class="t" style="left:479.0px;top:68.81px;font-size:10.5px;line-height:10.5px;color:#222;font-weight:normal;transform:scaleX(0.955);transform-origin:0 0;">АаБбВвГг,</div><div class="t" style="left:536.4px;top:68.81px;font-size:10.5px;line-height:10.5px;color:#222;font-weight:normal;transform:scaleX(0.955);transform-origin:0 0;">АаБбВвГг,</div><div class="t" style="left:479.7px;top:88.83px;font-size:10px;line-height:10px;color:#555;font-weight:normal;transform:scaleX(0.924);transform-origin:0 0;">¶ Звичай...</div><div class="t" style="left:536.9px;top:88.83px;font-size:10px;line-height:10px;color:#555;font-weight:normal;transform:scaleX(0.878);transform-origin:0 0;">¶ Без інте...</div><div class="t" style="left:592.4px;top:88.83px;font-size:10px;line-height:10px;color:#555;font-weight:normal;transform:scaleX(0.969);transform-origin:0 0;">Заголово...</div><div class="t" style="left:686.8px;top:58.30px;font-size:9.8px;line-height:9.8px;color:#444444;font-weight:normal;transform:scaleX(1.042);transform-origin:0 0;">Пошук</div><div class="t" style="left:686.8px;top:77.00px;font-size:9.8px;line-height:9.8px;color:#444444;font-weight:normal;transform:scaleX(0.985);transform-origin:0 0;">Замінити</div><div class="t" style="left:686.8px;top:94.90px;font-size:9.8px;line-height:9.8px;color:#444444;font-weight:normal;transform:scaleX(0.969);transform-origin:0 0;">Виділити</div><div class="t" style="left:220.3px;top:190.60px;font-size:21.5px;line-height:21.5px;color:#111;font-weight:normal;transform:scaleX(0.920);transform-origin:0 0;">1.</div><div class="t" style="left:264.7px;top:190.60px;font-size:21.5px;line-height:21.5px;color:#111;font-weight:normal;transform:scaleX(1.018);transform-origin:0 0;">зима</div><div class="t" style="left:220.3px;top:222.27px;font-size:21.5px;line-height:21.5px;color:#111;font-weight:normal;transform:scaleX(0.920);transform-origin:0 0;">2.</div><div class="t" style="left:264.7px;top:222.27px;font-size:21.5px;line-height:21.5px;color:#111;font-weight:normal;transform:scaleX(0.984);transform-origin:0 0;">весна</div><div class="t" style="left:220.3px;top:253.94px;font-size:21.5px;line-height:21.5px;color:#111;font-weight:normal;transform:scaleX(0.920);transform-origin:0 0;">3.</div><div class="t" style="left:264.7px;top:253.94px;font-size:21.5px;line-height:21.5px;color:#111;font-weight:normal;transform:scaleX(1.013);transform-origin:0 0;">літо</div><div class="t" style="left:220.3px;top:285.61px;font-size:21.5px;line-height:21.5px;color:#111;font-weight:normal;transform:scaleX(0.920);transform-origin:0 0;">4.</div><div class="t" style="left:264.7px;top:285.61px;font-size:21.5px;line-height:21.5px;color:#111;font-weight:normal;transform:scaleX(1.034);transform-origin:0 0;">осінь</div>
</body></html>
